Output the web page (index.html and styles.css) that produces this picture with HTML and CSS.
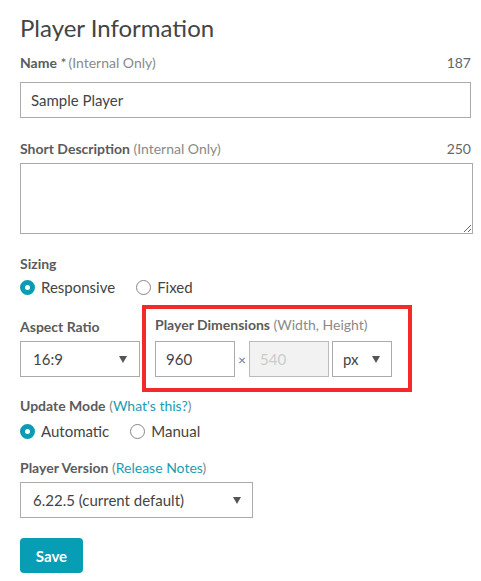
FILE: index.html
```html
<!DOCTYPE html>
<html>
<head>
<meta charset="utf-8">
<link rel="stylesheet" href="styles.css">
</head>
<body>
<div class="page">
  <h1 class="title">Player Information</h1>

  <div class="field f-name">
    <div class="label-row">
      <span class="label"><b>Name</b> <span class="star">*</span><span class="hint">(Internal Only)</span></span>
      <span class="count">187</span>
    </div>
    <input class="text-input" type="text" value="Sample Player">
  </div>

  <div class="field f-desc">
    <div class="label-row">
      <span class="label"><b>Short Description</b> <span class="hint">(Internal Only)</span></span>
      <span class="count">250</span>
    </div>
    <textarea class="textarea"></textarea>
  </div>

  <div class="field f-sizing">
    <div class="label"><b>Sizing</b></div>
    <div class="radios">
      <span class="radio"><span class="dot checked"></span>Responsive</span>
      <span class="radio"><span class="dot"></span>Fixed</span>
    </div>
  </div>

  <div class="size-row">
    <div class="aspect">
      <div class="label"><b>Aspect Ratio</b></div>
      <div class="select select-aspect"><span>16:9</span><svg class="caret" width="8" height="7" viewBox="0 0 8 7"><path d="M0 0H8L4 7Z"/></svg></div>
    </div>
    <div class="dims">
      <div class="label"><b>Player Dimensions</b> <span class="hint">(Width, Height)</span></div>
      <div class="dims-inputs">
        <div class="box box-w">960</div>
        <span class="times">×</span>
        <div class="box box-h">540</div>
        <div class="select select-unit"><span>px</span><svg class="caret" width="8" height="7" viewBox="0 0 8 7"><path d="M0 0H8L4 7Z"/></svg></div>
      </div>
    </div>
  </div>

  <div class="field f-update">
    <div class="label"><b>Update Mode</b> <span class="paren">(<a class="link">What's this?</a>)</span></div>
    <div class="radios">
      <span class="radio"><span class="dot checked"></span>Automatic</span>
      <span class="radio"><span class="dot"></span>Manual</span>
    </div>
  </div>

  <div class="field f-version">
    <div class="label"><b>Player Version</b> <span class="paren">(<a class="link">Release Notes</a>)</span></div>
    <div class="select select-version"><span>6.22.5 (current default)</span><svg class="caret" width="8" height="7" viewBox="0 0 8 7"><path d="M0 0H8L4 7Z"/></svg></div>
  </div>

  <button class="save">Save</button>
</div>
</body>
</html>
```

FILE: styles.css
```css
* { box-sizing: border-box; }
html, body { margin: 0; padding: 0; background: #fff; }
body {
  font-family: Lato, "Open Sans", "Liberation Sans", sans-serif;
  color: #444;
}
.page {
  padding: 14px 10px 0 20px;
  width: 481px;
}
.title {
  margin: 0 0 12px 0;
  font-size: 24px;
  font-weight: 400;
  line-height: 28px;
  color: #444;
}
.field { margin: 0; }
.f-name { margin-bottom: 22px; }
.f-desc { margin-bottom: 21px; }
.f-sizing { margin-bottom: 7px; }
.f-update { margin-bottom: 17px; }
.label-row {
  display: flex;
  justify-content: space-between;
  align-items: baseline;
}
.label {
  font-size: 14px;
  line-height: 17px;
  color: #888;
}
.label b { font-weight: 700; color: #5b5b5b; }
.star { color: #5b5b5b; margin-right: 2px; }
.hint { color: #8a8a8a; }
.paren { color: #888; }
.link { color: #1a9db3; text-decoration: none; }
.count { font-size: 14px; color: #666; line-height: 17px; }
.text-input {
  display: block;
  margin: 11px 0 0 0;
  width: 451px;
  height: 36px;
  border: 1px solid #aaa;
  padding: 0 10px;
  font-family: inherit;
  font-size: 15px;
  color: #444;
  outline: none;
}
.textarea {
  display: block;
  margin: 6px 0 0 0;
  width: 453px;
  height: 71px;
  border: 1px solid #aaa;
  resize: vertical;
  font-family: inherit;
  font-size: 15px;
}
.radios {
  display: flex;
  align-items: center;
  font-size: 15px;
  color: #444;
  line-height: 22px;
}
.f-sizing .radios { margin-top: 4px; }
.f-update .radios { margin-top: 6px; }
.radio { display: flex; align-items: center; margin-right: 21px; }
.dot {
  width: 15px; height: 15px;
  border-radius: 50%;
  border: 1px solid #888;
  background: #fff;
  margin-right: 6px;
}
.dot.checked {
  border: 5.5px solid #0b9cb3;
  background: #fff;
}
.size-row {
  display: flex;
  align-items: flex-end;
  margin-bottom: 5px;
}
.aspect { width: 122px; padding-bottom: 15px; }
.aspect .label { margin-bottom: 6px; }
.dims {
  width: 270px;
  border: 4px solid #f42a2a;
  padding: 7px 16px 11px 9px;
}
.dims .label { margin-bottom: 8px; }
.dims-inputs { display: flex; align-items: center; }
.select {
  display: flex;
  align-items: center;
  justify-content: space-between;
  height: 36px;
  border: 1px solid #aaa;
  padding: 0 12px;
  font-size: 15px;
  color: #444;
}
.caret { fill: #555; }
.select-aspect { width: 120px; }
.select-unit { width: 60px; margin-left: 3px; padding: 0 11px 0 10px; }
.select-version { width: 233px; margin-top: 6px; padding: 0 11px 0 12px; }
.box {
  height: 36px;
  width: 80px;
  border: 1px solid #aaa;
  font-size: 15px;
  padding: 0 10px;
  display: flex;
  align-items: center;
}
.box-h { background: #f2f2f2; color: #ccc; border-color: #bbb; }
.times { width: 14px; text-align: center; font-size: 14px; color: #777; }
.save {
  display: block;
  margin-top: 20px;
  width: 63px;
  height: 35px;
  border: none;
  border-radius: 4px;
  background: #079db4;
  color: #fff;
  font-family: inherit;
  font-weight: 700;
  font-size: 15px;
  padding: 0;
}
```
